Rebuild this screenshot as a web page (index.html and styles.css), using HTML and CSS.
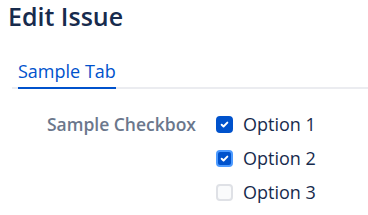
FILE: index.html
```html
<!DOCTYPE html>
<html lang="en">
  <head>
    <meta charset="utf-8" />
    <title>Edit Issue</title>
    <link rel="stylesheet" href="styles.css">
  </head>
  <body>
    <h1 class="title">Edit Issue</h1>
    <div class="tabs">
      <div class="tab is-selected">Sample Tab</div>
    </div>
    <div class="field">
      <div class="field-label">Sample Checkbox</div>
      <div class="options">
        <label class="option">
          <span class="box is-checked">
            <svg viewBox="0 0 16 16"><path d="M4.5 8.3l2.3 2.2 4.7-4.8" /></svg>
          </span>
          Option 1
        </label>
        <label class="option">
          <span class="box is-checked is-focused">
            <svg viewBox="0 0 16 16"><path d="M4.5 8.3l2.3 2.2 4.7-4.8" /></svg>
          </span>
          Option 2
        </label>
        <label class="option">
          <span class="box"></span>
          Option 3
        </label>
      </div>
    </div>
  </body>
</html>
```

FILE: styles.css
```css
body {
  margin: 0;
  padding: 0 0 0 8px;
  font-family: "Open Sans", "Noto Sans", sans-serif;
  color: #172b4d;
  background: #fff;
}

.title {
  margin: 0;
  font-size: 25px;
  font-weight: 600;
  line-height: 32px;
  color: #172b4d;
}

.tabs {
  display: flex;
  margin: 27px 0 0 4px;
  padding-left: 6px;
  border-bottom: 2px solid #ebecf0;
}

.tab {
  font-size: 18px;
  font-weight: 500;
  line-height: 24px;
  padding-bottom: 4px;
  margin-bottom: -2px;
  color: #0052cc;
  border-bottom: 2px solid #0052cc;
}

.field {
  display: flex;
  margin-top: 18px;
}

.field-label {
  width: 208px;
  padding-right: 20px;
  box-sizing: border-box;
  text-align: right;
  font-size: 17.5px;
  font-weight: 600;
  line-height: 34px;
  color: #6b778c;
}

.options {
  display: flex;
  flex-direction: column;
}

.option {
  display: flex;
  align-items: center;
  gap: 10px;
  height: 34px;
  font-size: 18px;
  color: #172b4d;
}

.box {
  width: 17px;
  height: 17px;
  box-sizing: border-box;
  border: 2px solid #dfe1e6;
  border-radius: 4px;
  background: #fafbfc;
  display: flex;
  align-items: center;
  justify-content: center;
}

.box.is-checked {
  background: #0052cc;
  border-color: #0052cc;
}

.box.is-focused {
  border-color: #4c9aff;
}

.box svg {
  width: 13px;
  height: 13px;
  fill: none;
  stroke: #fff;
  stroke-width: 2.4;
  stroke-linecap: round;
  stroke-linejoin: round;
}
```
